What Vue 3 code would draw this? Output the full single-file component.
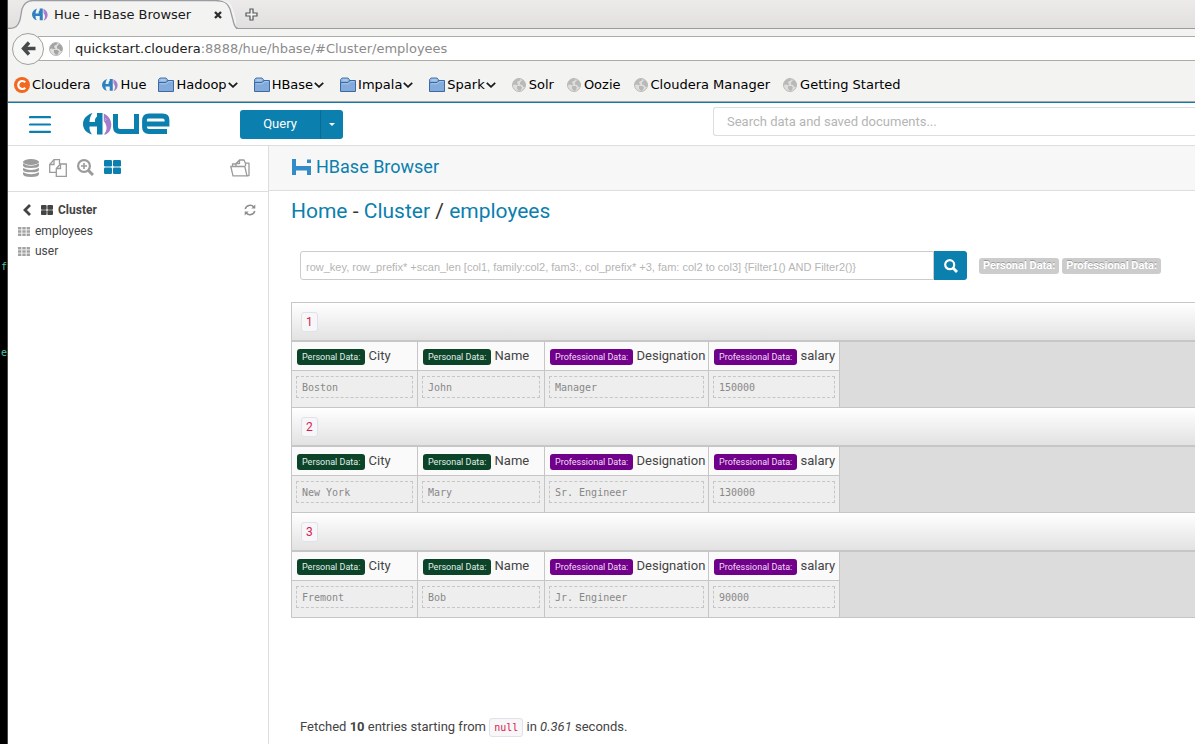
<script setup>
const bookmarks = [
  { icon: 'cloudera', label: 'Cloudera' },
  { icon: 'hue', label: 'Hue' },
  { icon: 'folder', label: 'Hadoop', menu: true },
  { icon: 'folder', label: 'HBase', menu: true },
  { icon: 'folder', label: 'Impala', menu: true },
  { icon: 'folder', label: 'Spark', menu: true },
  { icon: 'globe', label: 'Solr' },
  { icon: 'globe', label: 'Oozie' },
  { icon: 'globe', label: 'Cloudera Manager' },
  { icon: 'globe', label: 'Getting Started' },
]
const tables = ['employees', 'user']
const columns = [
  { family: 'Personal Data:', name: 'City', kind: 'personal' },
  { family: 'Personal Data:', name: 'Name', kind: 'personal' },
  { family: 'Professional Data:', name: 'Designation', kind: 'professional' },
  { family: 'Professional Data:', name: 'salary', kind: 'professional' },
]
const rows = [
  { key: '1', cells: ['Boston', 'John', 'Manager', '150000'] },
  { key: '2', cells: ['New York', 'Mary', 'Sr. Engineer', '130000'] },
  { key: '3', cells: ['Fremont', 'Bob', 'Jr. Engineer', '90000'] },
]
</script>

<template>
  <div class="desktop">
    <svg class="defs" width="0" height="0" aria-hidden="true">
      <symbol id="i-hue" viewBox="0 0 29 22">
        <path d="M9.500 0C3 2 0 6.500 0 11S3 20 9 21.500C7 19 6.300 16 6.500 13.500H14V21.500H19.500V0H14V3.500C12 5 11.800 7 12 9H6.500C6.500 6 7.500 2.500 9.500 0Z" fill="currentColor" />
        <path d="M20.800 .6C25.500 3 28.300 7 28.300 11.500S26.500 19.500 22.500 21.500H21C24.500 17 24.500 13 20.800 8Z" fill="#a57cc9" />
        <path d="M22.300 5.500l1.200 1M21.500 7l1 .5" stroke="#fff" stroke-width=".8" opacity=".7" />
      </symbol>
      <symbol id="i-cloudera" viewBox="0 0 16 16">
        <circle cx="8" cy="8" r="8" fill="#f4671f" />
        <path d="M11.200 5.300A4 4 0 1 0 11.200 10.700" fill="none" stroke="#fff" stroke-width="2.200" />
      </symbol>
      <symbol id="i-folder" viewBox="0 0 16 16">
        <path d="M.5 14V2.500L2 1H8L9.500 2.500V4.500H15" fill="#8fb4df" stroke="#4a76b0" />
        <path d="M2.500 3H7.500" stroke="#c4d9ef" />
        <path d="M.5 5.500H8L10 3.500H15.500V14.500H.5Z" fill="#82aada" stroke="#3c68a6" />
        <path d="M2 6.800H8.500L10.500 4.700H14.500" fill="none" stroke="#aac8ea" />
      </symbol>
      <symbol id="i-globe" viewBox="0 0 14 14">
        <circle cx="7" cy="7" r="6.500" fill="#dededd" stroke="#b9b9b8" />
        <path d="M1 5L3 2 6 .8 8.500 1.200 7.500 2.800 5.500 3.500 5 5.200 6.500 6.200 5.200 7.200 3 6.500 1 7ZM8 4.500L10 2 12 3 13.400 6 13 9 11.500 9 10 7 8 6.500ZM5 8L8.500 8 10 9.500 8.500 12.800 6.500 12.500 5 10.500Z" fill="currentColor" />
      </symbol>
      <symbol id="i-blocks" viewBox="0 0 17 14">
        <g fill="currentColor">
          <rect width="8" height="6.500" rx="1.200" /><rect x="9" width="8" height="6.500" rx="1.200" />
          <rect y="7.500" width="8" height="6.500" rx="1.200" /><rect x="9" y="7.500" width="8" height="6.500" rx="1.200" />
        </g>
      </symbol>
      <symbol id="i-grid" viewBox="0 0 12 9">
        <g fill="#a3a3a3">
          <rect width="3.400" height="2.500" /><rect x="4.300" width="3.400" height="2.500" /><rect x="8.600" width="3.400" height="2.500" />
          <rect y="3.250" width="3.400" height="2.500" /><rect x="4.300" y="3.250" width="3.400" height="2.500" /><rect x="8.600" y="3.250" width="3.400" height="2.500" />
          <rect y="6.500" width="3.400" height="2.500" /><rect x="4.300" y="6.500" width="3.400" height="2.500" /><rect x="8.600" y="6.500" width="3.400" height="2.500" />
        </g>
      </symbol>
    </svg>

    <aside class="terminal" aria-hidden="true"><span>f</span><span>e</span></aside>

    <div class="window">
      <div class="tabstrip">
        <div class="tab">
          <svg class="tab-shape" width="230" height="29" viewBox="0 0 230 29" aria-hidden="true">
            <path d="M0 29V28.500C8 28.500 10 26 12 20L14 9C16 3 19 .5 25 .5H213C220 .5 223 3 225 9L228 20V29Z" fill="#f3f3f2" />
            <path d="M0 28.500C8 28.500 10 26 12 20L14 9C16 3 19 .5 25 .5H207C216 .5 220 3 222 9L225 20C226 25 228 28.500 230 28.500" fill="none" stroke="#9c9da4" stroke-width="1.300" />
          </svg>
          <svg class="tab-icon" width="16" height="13"><use href="#i-hue" /></svg>
          <span class="tab-title">Hue - HBase Browser</span>
          <button class="tab-close" aria-label="Close tab">
            <svg width="8" height="8" viewBox="0 0 8 8"><path d="M1 1L7 7M7 1L1 7" stroke="#2b2e30" stroke-width="2.400" /></svg>
          </button>
        </div>
        <button class="new-tab" aria-label="New tab">
          <svg width="13" height="13" viewBox="0 0 13 13"><path d="M5 1H8V5H12V8H8V12H5V8H1V5H5Z" fill="#f3f3f2" stroke="#55575a" stroke-width="1.200" /></svg>
        </button>
      </div>

      <div class="navbar">
        <button class="back" aria-label="Back">
          <svg width="15" height="15" viewBox="0 0 15 15"><path d="M8 1.500L2.500 7.500L8 13.500M2.500 7.500H14.500" fill="none" stroke="#474a4b" stroke-width="3.400" /></svg>
        </button>
        <div class="urlbar">
          <svg width="14" height="14"><use href="#i-globe" /></svg>
          <span class="url"><b>quickstart.cloudera</b>:8888/hue/hbase/#Cluster/employees</span>
        </div>
      </div>

      <nav class="bookmarks">
        <a v-for="b in bookmarks" :key="b.label" href="#" :class="['bookmark', 'k-' + b.icon]">
          <svg class="bm-icon"><use :href="'#i-' + b.icon" /></svg>
          <span>{{ b.label }}</span>
          <svg v-if="b.menu" class="bm-arrow" width="10" height="6" viewBox="0 0 10 6"><path d="M.8 .8L5 4.800L9.200 .8" fill="none" stroke="#1a1a1a" stroke-width="1.800" /></svg>
        </a>
      </nav>

      <header class="topbar">
        <button class="burger" aria-label="Menu">
          <svg width="22" height="17" viewBox="0 0 22 17"><path d="M1 1.200H21M1 8.500H21M1 15.800H21" stroke="#0b7fad" stroke-width="2.200" stroke-linecap="round" /></svg>
        </button>
        <a class="logo" href="#" aria-label="Hue">
          <svg width="87" height="22" viewBox="0 0 87 22">
            <use href="#i-hue" width="29" height="22" />
            <path d="M32.500 1V14C32.500 17 34 18.500 37 18.500H53.500V1" fill="none" stroke="#0b7fad" stroke-width="5" />
            <path d="M84 18.500H66Q61.500 18.500 61.500 14V8Q61.500 3 66 3H79.500Q84 3 84 7V11H63" fill="none" stroke="#0b7fad" stroke-width="4.800" />
          </svg>
        </a>
        <div class="query">
          <button class="query-main">Query</button>
          <button class="query-more" aria-label="More query types">
            <svg width="6" height="3" viewBox="0 0 6 3"><path d="M0 0H6L3 3Z" fill="#fff" /></svg>
          </button>
        </div>
        <input class="global-search" type="text" aria-label="Search" placeholder="Search data and saved documents..." />
      </header>

      <div class="body">
        <aside class="sidebar">
          <div class="assist-tabs">
            <button aria-label="Databases">
              <svg width="16" height="18" viewBox="0 0 16 18" fill="#9b9b9b"><ellipse cx="8" cy="3" rx="8" ry="3" /><path d="M0 4.500Q8 9 16 4.500V6.500Q16 9 8 9T0 6.500Z" /><path d="M0 9Q8 13 16 9V10.700Q16 13.300 8 13.300T0 10.700Z" /><path d="M0 13.300Q8 17 16 13.300V15Q16 18 8 18T0 15Z" /></svg>
            </button>
            <button aria-label="Documents">
              <svg width="18" height="18" viewBox="0 0 18 18" fill="none" stroke="#9b9b9b" stroke-width="1.300"><path d="M7 13.300H.7V5.500L5 .7H10.500V5" /><path d="M5 .7V5.500H.7" /><path d="M7.300 9.500L11.500 5H17.300V17.300H7.300ZM11.500 5V9.500H7.300" /></svg>
            </button>
            <button aria-label="Search index">
              <svg width="17" height="17" viewBox="0 0 17 17" fill="none" stroke="#9b9b9b"><circle cx="7" cy="7" r="5.900" stroke-width="2.200" /><path d="M11.500 11.500L16 16" stroke-width="3" /><path d="M7 4V10M4 7H10" stroke-width="1.600" /></svg>
            </button>
            <button class="on" aria-label="HBase"><svg width="17" height="15" viewBox="0 0 17 15"><use href="#i-blocks" width="17" height="14" /></svg></button>
            <button class="push" aria-label="Open folder">
              <svg width="20" height="18" viewBox="0 0 20 18" fill="none" stroke="#9b9b9b" stroke-width="1.300" stroke-linejoin="round"><path d="M3 16.800L.8 7.500H14.800L17 16.800Z" /><path d="M6 7V4.500L9.500 1H14L15.500 4.500V7M9.500 1V4.500H6M15 3.800L19 4.200V16.500L17 16.800M2.500 7V5H6" /></svg>
            </button>
          </div>
          <div class="tree">
            <div class="tree-head">
              <button aria-label="Back to clusters"><svg width="8" height="12" viewBox="0 0 8 12"><path d="M7 1L2 6L7 11" fill="none" stroke="#444" stroke-width="2.800" /></svg></button>
              <svg class="cluster-icon" width="12" height="10"><use href="#i-blocks" /></svg>
              <strong>Cluster</strong>
              <button class="push" aria-label="Refresh">
                <svg width="12" height="12" viewBox="0 0 12 12" fill="none" stroke="#8e8e8e" stroke-width="1.500"><path d="M1.200 5A5 5 0 0 1 9.800 3M10.800 7A5 5 0 0 1 2.200 9" /><path d="M11.300 .5V4.500H7.300ZM.7 11.500V7.500H4.700Z" fill="#8e8e8e" stroke="none" /></svg>
              </button>
            </div>
            <a v-for="t in tables" :key="t" class="tree-item" href="#">
              <svg width="12" height="9"><use href="#i-grid" /></svg>{{ t }}
            </a>
          </div>
        </aside>

        <main class="main">
          <div class="app-head">
            <a href="#">
              <svg width="20" height="17" viewBox="0 0 20 17"><path d="M0 1H4V8H19V17H15V12.500H4V17H0ZM15 1.500H19V5H15Z" fill="#338cc8" /></svg>HBase Browser
            </a>
          </div>
          <div class="content">
            <h1><a href="#">Home</a> - <a href="#">Cluster</a> / <a href="#">employees</a></h1>

            <form class="filter" @submit.prevent>
              <input type="text" aria-label="Row query" placeholder="row_key, row_prefix* +scan_len [col1, family:col2, fam3:, col_prefix* +3, fam: col2 to col3] {Filter1() AND Filter2()}" />
              <button aria-label="Search">
                <svg width="14" height="14" viewBox="0 0 14 14" fill="none" stroke="#fff"><circle cx="5.700" cy="5.700" r="4.500" stroke-width="2.200" /><path d="M9 9L13 13" stroke-width="2.800" /></svg>
              </button>
              <span class="family">Personal Data:</span>
              <span class="family">Professional Data:</span>
            </form>

            <div class="records">
              <section v-for="r in rows" :key="r.key" class="record">
                <div class="record-head"><code class="key">{{ r.key }}</code></div>
                <table>
                  <colgroup><col class="c1" /><col class="c2" /><col class="c3" /><col class="c4" /></colgroup>
                  <thead>
                    <tr><th v-for="c in columns" :key="c.name" scope="col"><span :class="['tag', c.kind]">{{ c.family }}</span> {{ c.name }}</th></tr>
                  </thead>
                  <tbody>
                    <tr><td v-for="(v, i) in r.cells" :key="i"><pre>{{ v }}</pre></td></tr>
                  </tbody>
                </table>
              </section>
            </div>

            <p class="status">Fetched <b>10</b> entries starting from <code>null</code> in <i>0.361</i> seconds.</p>
          </div>
        </main>
      </div>
    </div>
  </div>
</template>

<style>
body { margin: 0; overflow: hidden; }
</style>

<style scoped>
* { box-sizing: border-box; }
button { border: 0; padding: 0; margin: 0; background: none; color: inherit; font: inherit; display: flex; align-items: center; justify-content: center; }
svg { display: block; flex: none; }
a { color: #0b7fad; text-decoration: none; }
.defs { position: absolute; }

.desktop { display: flex; min-height: 100vh; overflow: hidden; background: #fff; color: #444; font: 13px/20px Roboto, sans-serif; }
.terminal { flex: none; width: 8px; padding-top: 258px; text-align: right; background: #000; color: #4fc3a8; font: 10px/18px "DejaVu Sans Mono", monospace; border-right: 1px solid #4a4a4a; }
.terminal span { display: block; height: 86px; }
.window { flex: 1; min-width: 0; display: flex; flex-direction: column; }

.tabstrip { display: flex; height: 29px; border-bottom: 1px solid #9b9b9b; background: linear-gradient(#ecebea, #e1e0de); color: #1a1a1a; font: 13px/20px "DejaVu Sans", sans-serif; }
.tab { position: relative; display: flex; align-items: center; width: 230px; height: 29px; padding-left: 24px; }
.tab-shape { position: absolute; left: 0; top: 0; }
.tab-icon, .tab-title, .tab-close { position: relative; }
.tab-icon { color: #2f80bf; }
.tab-title { flex: 1; margin-left: 6px; white-space: nowrap; }
.tab-close { margin-right: 16px; }
.new-tab { margin-left: 6px; width: 14px; height: 29px; }

.navbar { display: flex; align-items: center; height: 39px; background: #f3f3f2; }
.back { position: relative; flex: none; width: 32px; height: 32px; margin-left: 4px; border: 1px solid #a0a09e; border-radius: 50%; background: #f7f7f6; }
.urlbar { flex: 1; display: flex; align-items: center; height: 25px; margin-left: -6px; padding-left: 11px; border: solid #adada8; border-width: 1px 0; background: #fff; color: #a3a3a2; }
.url { margin-left: 6px; padding-left: 5px; border-left: 1px solid #d0d0d0; color: #8b8b8b; font: 13px/17px "DejaVu Sans", sans-serif; white-space: nowrap; }
.url b { color: #1c1c1c; font-weight: normal; }

.bookmarks { display: flex; align-items: center; height: 34px; padding-left: 6px; background: #f3f3f2; border-bottom: 1px solid #a5a5a5; font: 13px/20px "DejaVu Sans", sans-serif; }
.bookmark { display: flex; align-items: center; margin-right: 12px; color: #000; white-space: nowrap; }
.bm-icon { width: 16px; height: 16px; margin-right: 2px; }
.k-globe { margin-right: 13px; }
.k-globe .bm-icon { width: 14px; height: 14px; margin-right: 3px; color: #b9b9b8; }
.k-hue .bm-icon { color: #2f80bf; }
.k-folder { margin-right: 16px; }
.bm-arrow { margin-left: 1px; }

.topbar { display: flex; align-items: center; height: 44px; border-top: 1px solid #0b7fad; border-bottom: 1px solid #ddd; }
.burger { margin-left: 21px; }
.logo { margin-left: 32px; }
.query { display: flex; margin-left: 70px; height: 29px; border-radius: 3px; background: #0b7fad; color: #fff; overflow: hidden; }
.query-main { width: 81px; border-right: 1px solid #0a6b93; }
.query-more { width: 22px; }
.global-search { flex: 1; min-width: 0; height: 29px; margin: 0 0 6px 370px; padding: 0 13px; border: 1px solid #ddd; border-right: 0; border-radius: 3px 0 0 3px; background: #fff; font: 13px/20px Roboto, sans-serif; outline: 0; }
.global-search::placeholder, .filter input::placeholder { color: #b5b5b5; opacity: 1; }

.body { flex: 1; display: flex; }
.sidebar { flex: none; width: 261px; border-right: 1px solid #ddd; }
.assist-tabs { display: flex; align-items: center; gap: 10px; height: 46px; padding: 0 18px 2px 15px; border-bottom: 1px solid #ddd; }
.push { margin-left: auto; }
.on { color: #0b7fad; }
.tree { padding: 8px 12px 0 10px; font-size: 12px; }
.tree-head { display: flex; align-items: center; height: 20px; margin-bottom: 1px; padding-left: 5px; color: #444; }
.cluster-icon { margin: 0 5px 0 10px; }
.tree-item { display: flex; align-items: center; gap: 5px; height: 20px; color: #444; }

.main { flex: 1; min-width: 0; }
.app-head { display: flex; align-items: center; height: 45px; padding: 0 0 3px 23px; border-bottom: 1px solid #ddd; background: #f7f7f7; font-size: 18px; }
.app-head a { display: flex; align-items: center; gap: 4px; }
.content { padding-left: 22px; }
h1 { margin: 5px 0 25px; font: 21px/30px Roboto, sans-serif; color: #333; }

.filter { display: flex; align-items: center; margin: 0 0 22px 9px; }
.filter input { flex: none; width: 634px; height: 29px; padding: 3px 5px 0; border: 1px solid #ccc; border-radius: 3px 0 0 3px; font: 11px/20px "Liberation Sans", sans-serif; outline: 0; }
.filter button { flex: none; width: 33px; height: 29px; margin-right: 12px; border-radius: 0 3px 3px 0; background: #0b7fad; }
.family { margin-right: 3px; padding: 0 4px; border-radius: 3px; background: #ccc; color: #fff; font: bold 11px/16px Roboto, sans-serif; text-shadow: 0 -1px 0 rgba(0, 0, 0, .25); white-space: nowrap; }

.records { border: 1px solid #c6c6c6; border-width: 1px 0 0 1px; background: #dcdcdc; }
.record { border-bottom: 1px solid #c6c6c6; }
.record-head { display: flex; align-items: center; height: 39px; padding-left: 9px; border-bottom: 2px solid #c6c6c6; background: linear-gradient(#fff, #e2e2e2); }
code { padding: 3px 4px; border: 1px solid #e1e1e8; border-radius: 3px; background: #f7f7f9; color: #d8194f; font: 10px/18px "DejaVu Sans Mono", monospace; }
.key { padding: 0 4px; font: 12px/18px Roboto, sans-serif; }
table { width: 548px; table-layout: fixed; border-spacing: 0; }
.c1 { width: 126px; } .c2 { width: 127px; } .c3 { width: 164px; } .c4 { width: 131px; }
th, td { border-right: 1px solid #c6c6c6; text-align: left; white-space: nowrap; }
th { height: 29px; padding: 0 0 0 5px; border-bottom: 1px solid #c6c6c6; background: #fafafa; font-weight: normal; }
td { height: 36px; padding: 0 4px; background: #eee; vertical-align: top; }
.tag { display: inline-block; padding: 0 5px; border-radius: 3px; color: #e4efe9; font-size: 9px; line-height: 16px; }
.personal { background: #0b4429; }
.professional { background: #70008a; color: #f0dcf5; }
pre { margin: 5px 0 0; padding: 1px 5px 0; border: 1px dashed #c6c6c6; color: #888; font: 10px/19px "DejaVu Sans Mono", monospace; }
.status { margin: 99px 0 0 9px; }
</style>
